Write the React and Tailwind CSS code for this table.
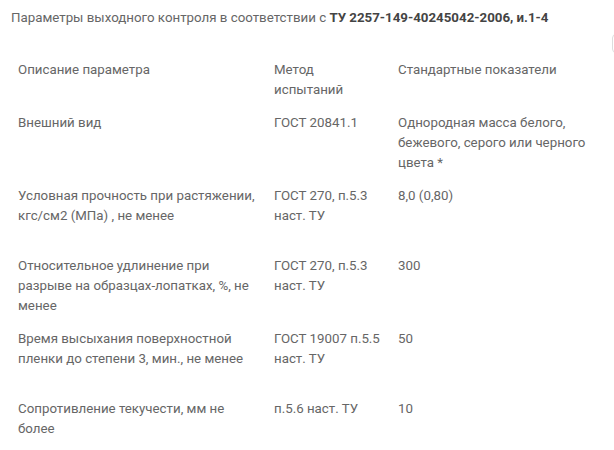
export default function App() {
  // each cell given as its lines, so the wraps match the page
  const rows = [
    {
      name: ["Внешний вид"],
      method: ["ГОСТ 20841.1"],
      value: ["Однородная масса белого,", "бежевого, серого или черного", "цвета *"],
    },
    {
      name: ["Условная прочность при растяжении,", "кгс/см2 (МПа) , не менее"],
      method: ["ГОСТ 270, п.5.3", "наст. ТУ"],
      value: ["8,0 (0,80)"],
    },
    {
      name: ["Относительное удлинение при", "разрыве на образцах-лопатках, %, не", "менее"],
      method: ["ГОСТ 270, п.5.3", "наст. ТУ"],
      value: ["300"],
    },
    {
      name: ["Время высыхания поверхностной", "пленки до степени 3, мин., не менее"],
      method: ["ГОСТ 19007 п.5.5", "наст. ТУ"],
      value: ["50"],
    },
    {
      name: ["Сопротивление текучести, мм не", "более"],
      method: ["п.5.6 наст. ТУ"],
      value: ["10"],
    },
  ];

  const Lines = ({ lines }) => (
    <div>
      {lines.map((l) => (
        <div key={l} className="whitespace-nowrap">
          {l}
        </div>
      ))}
    </div>
  );

  return (
    <div
      className="relative w-[614px] h-[450px] overflow-hidden bg-white text-[#666] text-[13.3px] leading-[20px]"
      style={{ fontFamily: "Roboto, 'Noto Sans', sans-serif" }}
    >
      <p className="pl-[11px] pt-[8px] whitespace-nowrap">
        Параметры выходного контроля в соответствии с{" "}
        <b className="font-bold text-[#444]">ТУ 2257-149-40245042-2006, и.1-4</b>
      </p>

      {/* scroll button edge */}
      <div className="absolute right-[-20px] top-[34px] w-[22px] h-[19px] rounded-[4px] border border-[#ddd]"></div>

      <div className="mt-[32px] ml-[18px] w-[580px]">
        <div className="grid grid-cols-[256px_124px_1fr] pb-[13px]">
          <div>Описание параметра</div>
          <Lines lines={["Метод", "испытаний"]} />
          <div>Стандартные показатели</div>
        </div>

        {rows.map((row) => (
          <div
            key={row.name[0]}
            className="grid grid-cols-[256px_124px_1fr] min-h-[70px] pb-[13px]"
          >
            <Lines lines={row.name} />
            <Lines lines={row.method} />
            <Lines lines={row.value} />
          </div>
        ))}
      </div>
    </div>
  );
}
